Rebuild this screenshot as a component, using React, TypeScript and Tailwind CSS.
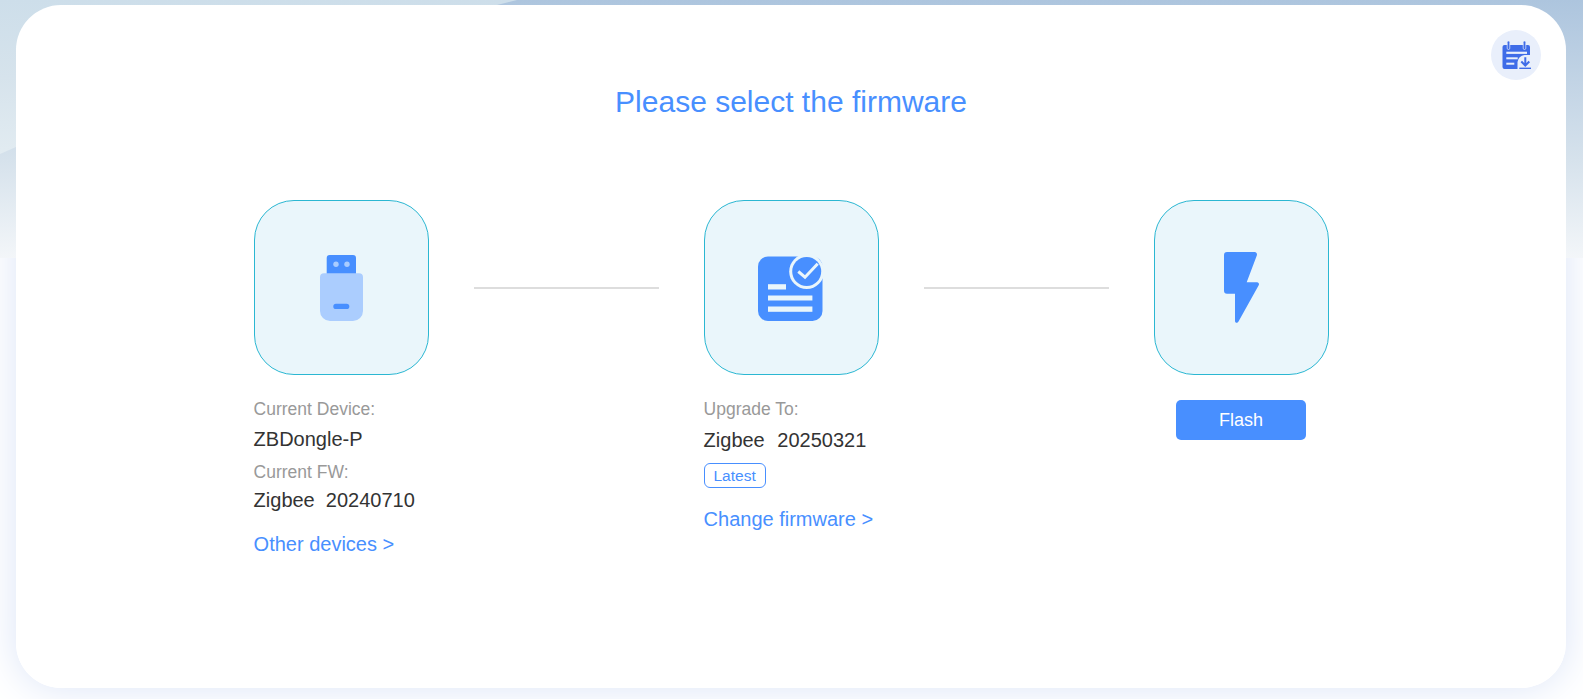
function UsbIcon() {
  return (
    <svg width="43" height="66" viewBox="0 0 43 66" fill="none">
      <path d="M6.700 3a3 3 0 0 1 3-3H33a3 3 0 0 1 3 3v20H6.700z" fill="#488fff" />
      <circle cx="16" cy="9.300" r="2.700" fill="#a9ccff" />
      <circle cx="27" cy="9.300" r="2.700" fill="#a9ccff" />
      <path d="M0 22.300a4 4 0 0 1 4-4h35a4 4 0 0 1 4 4V56a10 10 0 0 1-10 10H10A10 10 0 0 1 0 56z" fill="#abcdfe" />
      <rect x="13.300" y="48.700" width="16" height="5.400" rx="2.700" fill="#488fff" />
    </svg>
  );
}

function DocIcon() {
  return (
    <svg width="66" height="67" viewBox="0 0 66 67" fill="none">
      <rect x="0" y="2.500" width="64.500" height="64.500" rx="10" fill="#488fff" />
      <circle cx="48.700" cy="17.500" r="17.500" fill="#eaf6fb" />
      <circle cx="48.700" cy="17.500" r="14.500" fill="#488fff" />
      <path d="M40.300 17.500l6.700 5.700 12.700-13.400" stroke="#eaf6fb" strokeWidth="3" fill="none" />
      <rect x="10" y="30.200" width="18" height="5.300" fill="#eaf6fb" />
      <rect x="10" y="41.500" width="44.400" height="5" fill="#eaf6fb" />
      <rect x="10" y="52.500" width="44.400" height="5.300" fill="#eaf6fb" />
    </svg>
  );
}

function BoltIcon() {
  return (
    <svg width="35" height="71" viewBox="0 0 35 71" fill="none">
      <path
        d="M3 0h27.500a2.500 2.500 0 0 1 2.300 3.400L22.700 30.300H33a2 2 0 0 1 1.700 3L14.500 69.500c-1.300 2.200-3.500 1.500-3.500-.8V41.700H3a3 3 0 0 1-3-3V3a3 3 0 0 1 3-3z"
        fill="#488fff"
      />
    </svg>
  );
}

function CalendarIcon() {
  return (
    <svg width="29" height="28" viewBox="0 0 29 28" fill="none">
      <path d="M2.500 4H26a2 2 0 0 1 2 2v8h-5.500a7.500 7.500 0 0 0-7 7v7h-13a2 2 0 0 1-2-2V6a2 2 0 0 1 2-2z" fill="#3f6ce8" />
      <rect x="5.200" y="0" width="2.600" height="8.500" rx="1.300" fill="#3f6ce8" stroke="#e9effb" strokeWidth="0.700" />
      <rect x="21.200" y="0" width="2.600" height="8.500" rx="1.300" fill="#3f6ce8" stroke="#e9effb" strokeWidth="0.700" />
      <rect x="4.300" y="10.700" width="20.700" height="2.200" fill="#e9effb" />
      <rect x="4.300" y="16.300" width="11.400" height="2" fill="#e9effb" />
      <rect x="4.300" y="21.700" width="8" height="2" fill="#e9effb" />
      <path d="M23.300 16.300v7.500M19.300 20.500l4 4 4-4" stroke="#3f6ce8" strokeWidth="2" fill="none" />
      <rect x="17.300" y="26.600" width="11.700" height="1.400" fill="#3f6ce8" />
    </svg>
  );
}

function StepBox({ children }: { children: React.ReactNode }) {
  return (
    <div className="flex h-[175px] w-[175px] shrink-0 items-center justify-center rounded-[40px] border border-[#2bb7d2] bg-[#eaf6fb]">
      {children}
    </div>
  );
}

function Connector() {
  return <div className="mx-[45px] mt-[87px] h-[2px] w-[185px] shrink-0 bg-[#dddddd]" />;
}

export default function App() {
  return (
    <div className="relative h-[699px] w-full overflow-hidden bg-white pb-[11px] pl-[16px] pr-[17px] pt-[5px] font-['Liberation_Sans',Arial,sans-serif]">
      <div className="absolute left-[16px] right-[17px] top-[5px] h-[683px] rounded-[45px] shadow-[0_0_40px_#dbe4f7]" />
      <div className="absolute left-0 right-0 top-0 h-[258px] bg-[linear-gradient(180deg,#cddeea_0%,#d6e3ec_30%,#e1ebf1_58%,#f5f8fb_100%)]" />
      <div className="absolute left-0 right-0 top-0 h-[258px] bg-[linear-gradient(180deg,#adc5de_0%,#d6e2ec_62%,#f3f6f9_100%)] [clip-path:polygon(0_154px,16px_147px,497px_5px,517px_0,100%_0,100%_100%,0_100%)]" />
      <main className="relative flex h-[683px] flex-col rounded-[45px] bg-white">
        <button className="absolute right-[25px] top-[25px] flex h-[50px] w-[50px] items-center justify-center rounded-full bg-[#e9effb]">
          <CalendarIcon />
        </button>
        <h1 className="mt-[79px] text-center text-[30px] leading-[36px] text-[#488fff]">Please select the firmware</h1>
        <div className="ml-[237.6px] mt-[80px] flex items-start">
          <section className="w-[175px] shrink-0">
            <StepBox>
              <UsbIcon />
            </StepBox>
            <div className="mt-[24px] whitespace-nowrap text-[17.5px] leading-[20px] text-[#999999]">Current Device:</div>
            <div className="mt-[9px] whitespace-nowrap text-[20px] leading-[22px] text-[#333333]">ZBDongle-P</div>
            <div className="mt-[12px] whitespace-nowrap text-[17.5px] leading-[20px] text-[#999999]">Current FW:</div>
            <div className="mt-[7px] whitespace-pre text-[20px] leading-[22px] text-[#333333]">Zigbee  20240710</div>
            <div className="mt-[22px] whitespace-nowrap text-[20px] leading-[22px] text-[#488fff]">Other devices &gt;</div>
          </section>
          <Connector />
          <section className="w-[175px] shrink-0">
            <StepBox>
              <DocIcon />
            </StepBox>
            <div className="mt-[24px] whitespace-nowrap text-[17.5px] leading-[20px] text-[#999999]">Upgrade To:</div>
            <div className="mt-[9px] whitespace-pre text-[20px] leading-[24px] text-[#333333]">
              Zigbee  <span className="ml-[1.5px]">20250321</span>
            </div>
            <div className="mt-[11px] flex h-[25px] w-[62px] items-center justify-center rounded-[6px] border border-[#488fff] text-[15.5px] text-[#488fff]">Latest</div>
            <div className="mt-[20px] whitespace-nowrap text-[20px] leading-[22px] text-[#488fff]">Change firmware &gt;</div>
          </section>
          <Connector />
          <section className="flex w-[175px] shrink-0 flex-col items-center">
            <StepBox>
              <BoltIcon />
            </StepBox>
            <button className="mt-[25px] h-[40px] w-[130px] rounded-[5px] bg-[#488fff] text-[18px] text-white">Flash</button>
          </section>
        </div>
      </main>
    </div>
  );
}
